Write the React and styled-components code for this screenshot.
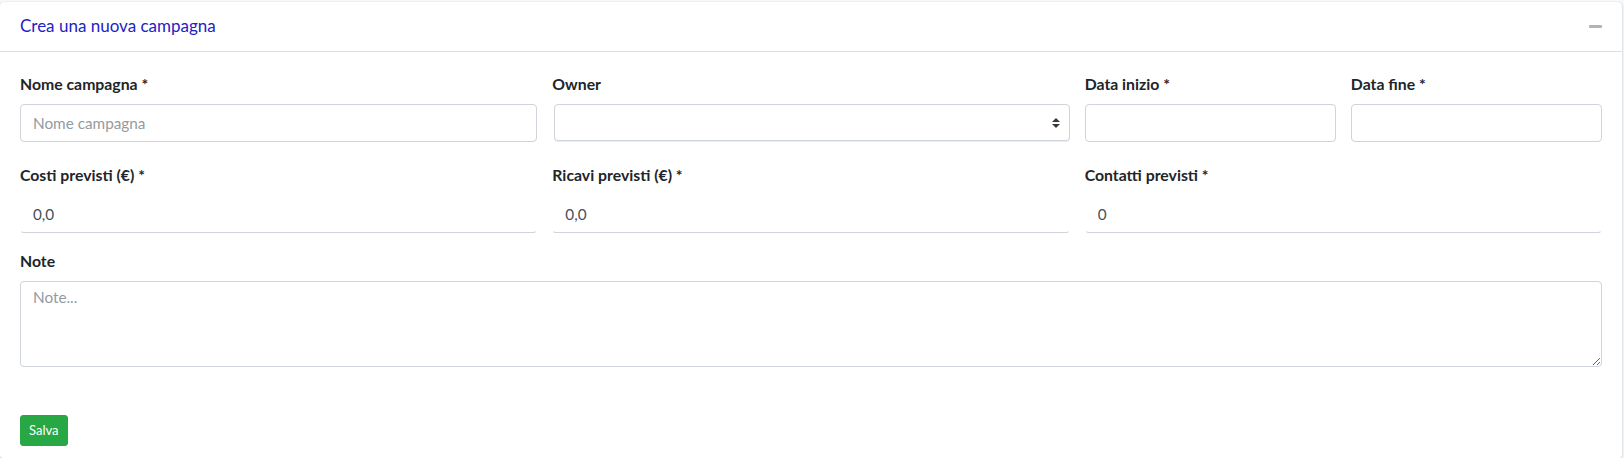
import styled, { createGlobalStyle } from "styled-components";

const GlobalStyle = createGlobalStyle`
    body {
        margin: 0;
        background: #f8f9fa;
        font-family: Lato, "Liberation Sans", sans-serif;
        color: #212529;
    }
    * {
        box-sizing: border-box;
    }
`

const fields = [
    [
        { label: "Nome campagna *", span: 4, kind: "input", placeholder: "Nome campagna" },
        { label: "Owner", span: 4, kind: "select" },
        { label: "Data inizio *", span: 2, kind: "input" },
        { label: "Data fine *", span: 2, kind: "input" },
    ],
    [
        { label: "Costi previsti (€) *", span: 4, kind: "line", value: "0,0" },
        { label: "Ricavi previsti (€) *", span: 4, kind: "line", value: "0,0" },
        { label: "Contatti previsti *", span: 4, kind: "line", value: "0" },
    ],
]

const MinusIcon = () => (
    <svg width="13" height="3" viewBox="0 0 13 3">
        <rect x="0" y="0" width="13" height="3" rx="1" fill="#adb5bd" />
    </svg>
)

const SortIcon = () => (
    <svg width="8" height="10" viewBox="0 0 4 5">
        <path fill="#343a40" d="M2 0L0 2h4zm0 5L0 3h4z" />
    </svg>
)

const renderControl = (field) => {
    if (field.kind === "select") {
        return (
            <SelectWrap>
                <Select defaultValue="">
                    <option value=""></option>
                </Select>
                <Arrow>
                    <SortIcon />
                </Arrow>
            </SelectWrap>
        )
    }
    if (field.kind === "line") {
        return <Input type="text" $line defaultValue={field.value} />
    }
    return <Input type="text" placeholder={field.placeholder} />
}

const App = () => {
    return (
        <Page>
            <GlobalStyle />
            <Card>
                <CardHeader>
                    <Title>Crea una nuova campagna</Title>
                    <ToolButton type="button">
                        <MinusIcon />
                    </ToolButton>
                </CardHeader>
                <CardBody>
                    {fields.map((row, i) => (
                        <FormRow key={i} $gap={i === 0 ? 21 : 16}>
                            {row.map((field) => (
                                <Field key={field.label} $span={field.span}>
                                    <Label>{field.label}</Label>
                                    {renderControl(field)}
                                </Field>
                            ))}
                        </FormRow>
                    ))}
                    <FormRow $gap={16}>
                        <Field $span={12}>
                            <Label>Note</Label>
                            <TextArea placeholder="Note..." />
                        </Field>
                    </FormRow>
                </CardBody>
                <CardFooter>
                    <SaveButton type="button">Salva</SaveButton>
                </CardFooter>
            </Card>
        </Page>
    )
}

const Page = styled.div`
    padding: 2px 2px 0 0;
`
const Card = styled.div`
    background: #fff;
    border-radius: 4px;
    box-shadow: 0 0 1px rgba(0, 0, 0, 0.125), 0 1px 3px rgba(0, 0, 0, 0.2);
`
const CardHeader = styled.div`
    display: flex;
    align-items: center;
    justify-content: space-between;
    height: 50px;
    padding: 0 20px;
    border-bottom: 1px solid rgba(0, 0, 0, 0.125);
`
const Title = styled.h3`
    margin: 0;
    font-size: 17px;
    font-weight: 400;
    color: #2222c4;
    line-height: 1.2;
`
const ToolButton = styled.button`
    display: flex;
    align-items: center;
    background: transparent;
    border: 0;
    padding: 0;
    cursor: pointer;
`
const CardBody = styled.div`
    padding: 20px 20px 20px;
`
const FormRow = styled.div`
    display: grid;
    grid-template-columns: repeat(12, 1fr);
    column-gap: 15px;
    margin-bottom: ${(p) => p.$gap}px;
    &:last-child {
        margin-bottom: 16px;
    }
`
const Field = styled.div`
    grid-column: span ${(p) => p.$span};
    min-width: 0;
`
const Label = styled.label`
    display: block;
    font-size: 15.8px;
    font-weight: 700;
    line-height: 24px;
    margin-bottom: 8px;
    color: #212529;
`
const Input = styled.input`
    display: block;
    width: 100%;
    height: 38px;
    padding: 6px 12px;
    font-family: inherit;
    font-size: 15.3px;
    color: #495057;
    background: #fff;
    border: 1px solid #ced4da;
    border-radius: 4px;
    outline: none;
    ${(p) => p.$line && `
        margin-top: 3px;
        border-color: transparent;
        border-bottom-color: #ced4da;
    `}
    &::placeholder {
        color: #939ba2;
    }
`
const SelectWrap = styled.div`
    position: relative;
    margin: 2px 0 0 2px;
`
const Select = styled.select`
    display: block;
    width: 100%;
    height: 37px;
    padding: 6px 28px 6px 12px;
    font-family: inherit;
    font-size: 15px;
    color: #495057;
    background: #fff;
    border: 1px solid #ced4da;
    border-radius: 4px;
    box-shadow: 0 1px 1px rgba(0, 0, 0, 0.075);
    appearance: none;
    outline: none;
`
const Arrow = styled.span`
    position: absolute;
    right: 10px;
    top: 50%;
    transform: translateY(-50%);
    display: flex;
    pointer-events: none;
`
const TextArea = styled.textarea`
    display: block;
    width: 100%;
    height: 86px;
    padding: 6px 12px;
    font-family: inherit;
    font-size: 15.3px;
    color: #495057;
    border: 1px solid #ced4da;
    border-radius: 4px;
    resize: vertical;
    outline: none;
    &::placeholder {
        color: #939ba2;
    }
`
const CardFooter = styled.div`
    padding: 12px 20px;
    background: #fff;
    border-radius: 0 0 4px 4px;
`
const SaveButton = styled.button`
    height: 31px;
    padding: 4px 8px;
    font-family: inherit;
    font-size: 13px;
    line-height: 1.5;
    color: #fff;
    background: #28a745;
    border: 1px solid #28a745;
    border-radius: 3px;
    cursor: pointer;
`

export default App
